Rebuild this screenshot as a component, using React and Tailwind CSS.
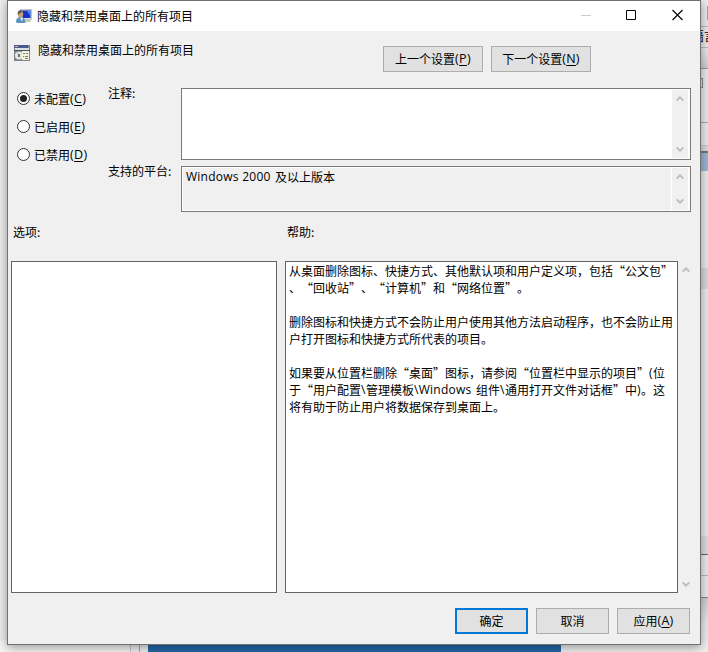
import React from "react";

const En = ({ children, w = "" }) => (
  <span className={`inline-block h-[17px] align-top whitespace-pre font-['Open_Sans','Noto_Sans',sans-serif] ${w}`}>{children}</span>
);

const Key = ({ k }) => (
  <En w="text-[12.5px] tracking-[0.3px]">
    (<span className="underline underline-offset-2">{k}</span>)
  </En>
);

const Chevron = ({ down = false }) => (
  <svg width="8" height="6" viewBox="0 0 8 6" className={`shrink-0 ${down ? "rotate-180" : ""}`}>
    <path d="M0.7 4.6L4 1.3L7.3 4.6" fill="none" stroke="#bdbdbd" strokeWidth="2" />
  </svg>
);

const ScrollBar = ({ className }) => (
  <div className={`flex flex-col items-center justify-between bg-[#f0f0f0] ${className}`}>
    <Chevron />
    <Chevron down />
  </div>
);

const Radio = ({ checked, label, k }) => (
  <div className="flex h-7 items-center">
    <span className="mr-1 flex size-[13px] shrink-0 items-center justify-center rounded-full border border-[#333] bg-white">
      {checked && <span className="size-[7px] rounded-full bg-[#222]" />}
    </span>
    <span className="whitespace-nowrap">
      {label}
      <Key k={k} />
    </span>
  </div>
);

const Button = ({ children, className = "border border-[#adadad]" }) => (
  <button className={`flex h-[26px] items-center justify-center bg-[#e1e1e1] pb-[2px] whitespace-nowrap ${className}`}>
    <span>{children}</span>
  </button>
);

const UserMonitorIcon = () => (
  <svg width="16" height="15" viewBox="0 0 16 15">
    <rect x="4.500" y="0.500" width="11" height="10" fill="#dcdfda" stroke="#b4b7b5" strokeWidth="0.8" />
    <rect x="6" y="1.500" width="8.500" height="7.500" fill="#1233c4" />
    <path d="M10.500 1.500h4v6z" fill="#4d86f2" />
    <path d="M9 11h5l1.500 2H9z" fill="#c4c6c4" />
    <path d="M0 13c0-3.500 2-5 4.500-5S9 9.500 9.500 14H1z" fill="#5b93bd" />
    <path d="M4 8.500l2 4 1-4z" fill="#e8eff5" />
    <ellipse cx="4.600" cy="5.200" rx="2.600" ry="3.400" fill="#c2a078" />
    <path d="M1.800 6c-1-4.500 3-6 5.400-3.300L4 4z" fill="#5d5348" />
  </svg>
);

const PolicyIcon = () => (
  <svg width="16" height="16" viewBox="0 0 16 16" shapeRendering="crispEdges">
    <rect width="16" height="16" fill="#7b858b" />
    <rect width="14" height="3" fill="#4a5791" />
    <rect x="1" y="1" width="3" height="1" fill="#d9c76b" />
    <rect x="1" y="3" width="14" height="2" fill="#dcdfe2" />
    <rect y="5" width="16" height="1" fill="#4b545a" />
    <circle cx="5" cy="10.500" r="4" fill="#e2e6df" shapeRendering="auto" />
    <path d="M5 10.500L2 8L4 6.600z" fill="#b9d39c" />
    <circle cx="5" cy="10.500" r="1.200" fill="#69777b" />
    <rect x="8" y="6" width="7" height="9" fill="#f4f1df" />
    <path d="M9 8.500h2M12 8.500h2M9 11.500h1M11 11.500h3M11 13.500h3" stroke="#777d70" />
  </svg>
);

export default function App() {
  return (
    <div className="relative h-[652px] w-[708px] overflow-hidden bg-[#efefef] font-['Noto_Sans_CJK_SC',sans-serif] text-[12px] leading-[17px] text-black [text-spacing-trim:space-all]">
      <div className="absolute top-0 left-[692px] flex h-[652px] w-4 flex-col bg-[#ececec]">
        <div className="flex h-[27px] shrink-0 items-start justify-end border-b border-[#bbb] pt-[6px]">
          <div className="h-[14px] w-px bg-[#a5a5a5]" />
        </div>
        <div className="h-[21px] w-6 shrink-0 border-b border-[#bbb] whitespace-nowrap">语言</div>
        <div className="h-[21px] shrink-0 border-b border-[#999] bg-linear-to-b from-[#ececec] to-[#cfcfcf]" />
        <div className="h-[54px] shrink-0 border-b border-[#aaa] pt-[9px]">
          <div className="h-[10px] w-[11px] border border-[#858585]" />
        </div>
        <div className="h-[23px] shrink-0 border-b border-[#ccc]" />
        <div className="h-[7px] shrink-0 border-b-2 border-[#777] bg-[#dcdcdc]" />
        <div className="h-[18px] shrink-0 bg-[#9bb6d6]" />
        <div className="h-[97px] shrink-0" />
        <div className="h-[21px] shrink-0 bg-[#dadada]" />
        <div className="h-[247px] shrink-0" />
        <div className="h-[19px] shrink-0 border-b border-[#666] bg-[#dedede]" />
        <div className="h-[21px] shrink-0 border-b border-[#bbb]" />
        <div className="h-[22px] shrink-0 border-b border-[#888]" />
        <div className="grow bg-linear-to-b from-[#cfcfcf] via-[#ececec] to-[#f0f0f0]" />
      </div>
      <div className="absolute top-[640px] left-0 flex h-3 w-full bg-[#efefef]">
        <div className="w-[131px] border-r border-[#c5c5d0] bg-[#f5f5f5]" />
        <div className="w-[9px] border-r border-[#aaa]" />
        <div className="ml-2 w-[413px] bg-[#2366a8]" />
      </div>

      <div className="absolute top-0 left-[7px] flex h-[645px] w-[694px] flex-col border border-[#707070] bg-[#f0f0f0] shadow-[0_2px_10px_rgba(0,0,0,0.4)]">
        <div className="flex h-[30px] shrink-0 items-center bg-white pl-2">
          <UserMonitorIcon />
          <span className="-mt-[2px] ml-[5px]">隐藏和禁用桌面上的所有项目</span>
          <svg className="-mt-[2px] mr-[16px] ml-auto" width="103" height="12" viewBox="0 0 103 12" fill="none">
            <path d="M0 6.500h10" stroke="#ccc" />
            <path d="M45.500 1.500h9v9h-9z" stroke="#000" />
            <path d="M91.500 1l10 10M101.500 1l-10 10" stroke="#000" strokeWidth="1.100" />
          </svg>
        </div>

        <div className="flex h-[57px] shrink-0">
          <div className="flex w-[375px] items-start pt-[10px] pl-[6px]">
            <div className="mt-[4px]">
              <PolicyIcon />
            </div>
            <span className="ml-2">隐藏和禁用桌面上的所有项目</span>
          </div>
          <div className="flex gap-2 pt-[15px]">
            <Button className="w-[100px] border border-[#adadad]">
              上一个设置
              <Key k="P" />
            </Button>
            <Button className="w-[100px] border border-[#adadad]">
              下一个设置
              <Key k="N" />
            </Button>
          </div>
        </div>

        <div className="flex h-[124px] shrink-0">
          <div className="-mt-1 w-[100px] pl-[9px]">
            <Radio checked label="未配置" k="C" />
            <Radio label="已启用" k="E" />
            <Radio label="已禁用" k="D" />
          </div>
          <div className="w-[73px]">
            <div className="-mt-1 h-[78px]">注释:</div>
            <div>支持的平台:</div>
          </div>
          <div className="flex flex-col gap-[6px]">
            <div className="flex h-[72px] w-[510px] border border-[#7a7a7a] bg-white p-px">
              <ScrollBar className="mr-px ml-auto w-4 py-[6px]" />
            </div>
            <div className="flex h-[46px] w-[510px] border border-[#7a7a7a] bg-white p-px">
              <div className="mr-px grow bg-[#f0f0f0] pl-[3px]">
                <En w="w-[89px] tracking-[0.25px]">Windows 2000 </En>及以上版本
              </div>
              <ScrollBar className="mr-px w-4 py-[6px]" />
            </div>
          </div>
        </div>

        <div className="flex h-[49px] shrink-0 pt-[11px] pl-[5px]">
          <div className="w-[274px]">选项:</div>
          <div>帮助:</div>
        </div>

        <div className="flex h-[332px] shrink-0 pl-[3px]">
          <div className="mr-2 w-[266px] border border-[#646464] bg-white" />
          <div className="w-[393px] border border-[#646464] bg-white pl-[3px] whitespace-nowrap">
            <p className="h-[17px]">从桌面删除图标、快捷方式、其他默认项和用户定义项，包括“公文包”</p>
            <p className="h-[17px]">、“回收站”、“计算机”和“网络位置”。</p>
            <p className="mt-[17px] h-[17px]">删除图标和快捷方式不会防止用户使用其他方法启动程序，也不会防止用</p>
            <p className="h-[17px]">户打开图标和快捷方式所代表的项目。</p>
            <p className="mt-[17px] h-[17px]">
              如果要从位置栏删除“桌面”图标，请参阅“位置栏中显示的项目”<En w="w-1">(</En>位
            </p>
            <p className="h-[17px]">
              于“用户配置<En w="w-[5px]">\</En>管理模板<En w="w-[62px] tracking-[0.25px]">\Windows </En>组件
              <En w="w-[5px]">\</En>通用打开文件对话框”中<En w="w-1">)</En>。这
            </p>
            <p className="h-[17px]">将有助于防止用户将数据保存到桌面上。</p>
          </div>
          <ScrollBar className="w-4 py-[6px]" />
        </div>

        <div className="flex justify-end gap-2 pt-[15px] pr-[10px]">
          <Button className="w-[73px] border-2 border-[#0078d7]">确定</Button>
          <Button className="w-[73px] border border-[#adadad]">取消</Button>
          <Button className="w-[73px] border border-[#adadad]">
            应用
            <Key k="A" />
          </Button>
        </div>
      </div>
    </div>
  );
}
